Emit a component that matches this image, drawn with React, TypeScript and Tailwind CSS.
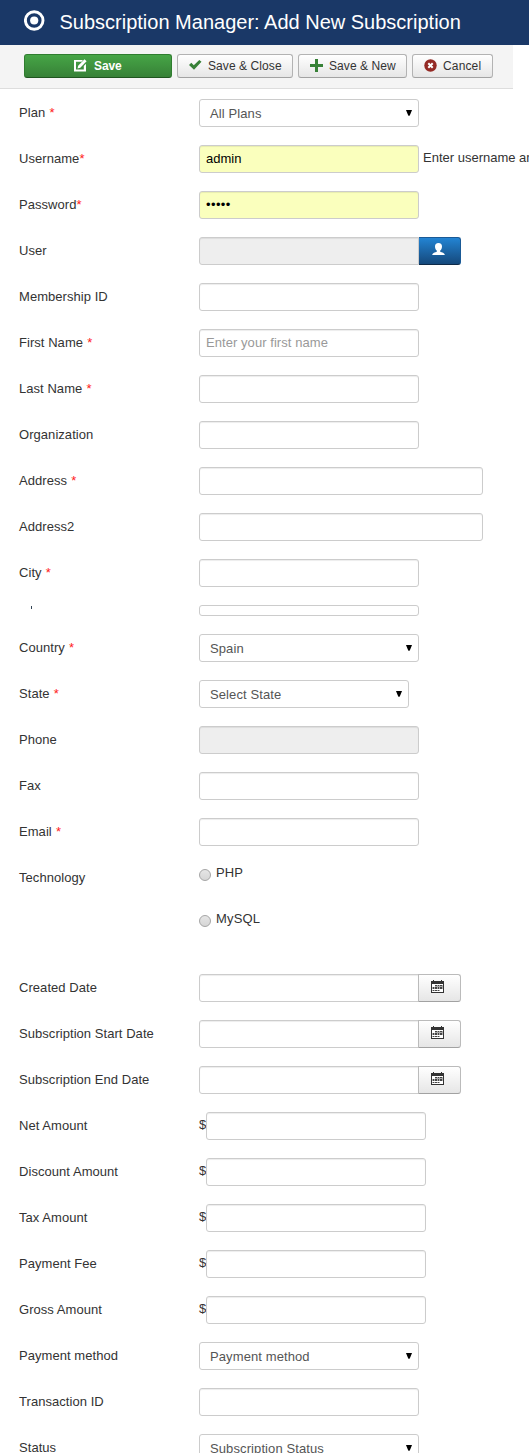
import type { ReactNode } from "react";

const fieldBase =
  "block h-7 shrink-0 rounded-[3px] border border-[#ccc] px-1.5 text-[13px] leading-[18px] outline-none shadow-[inset_0_1px_1px_rgba(0,0,0,0.075)]";

function Row({ label, required, tight, children }: { label: string; required?: boolean; tight?: boolean; children: ReactNode }) {
  return (
    <div className="mb-[18px] flex h-7 items-start">
      <label className="w-[180px] shrink-0 pt-[5px] leading-[18px] tracking-[0.05px] whitespace-nowrap">
        {label}
        {required && <span className={tight ? "text-[#ff2020]" : "ml-[0.5px] text-[#ff2020]"}>{tight ? "*" : " *"}</span>}
      </label>
      {children}
    </div>
  );
}

function TextField({ className = "w-[220px] bg-white", ...rest }: { className?: string; type?: string; placeholder?: string; defaultValue?: string; disabled?: boolean }) {
  return <input className={`${fieldBase} pb-[2px] placeholder:tracking-[0.06px] placeholder:text-[#999] ${className}`} {...rest} />;
}

function SelectBox({ value, className = "w-[220px]" }: { value: string; className?: string }) {
  return (
    <button type="button" className={`flex h-7 items-center justify-between rounded-[3px] border border-[#ccc] bg-white pr-[6px] pl-[10px] text-[13px] leading-[18px] tracking-[0.1px] text-[#555] ${className}`}>
      <span className="pt-[2px]">{value}</span>
      <svg width="6" height="6" viewBox="0 0 6 6" className="mb-px">
        <path d="M0 0h6L4.900 2.800 3.600 5.800H2.400L1.100 2.800z" fill="#000" />
      </svg>
    </button>
  );
}

function MoneyRow({ label }: { label: string }) {
  return (
    <Row label={label}>
      <span className="w-[7px] pt-[4px] leading-[18px]">$</span>
      <TextField />
    </Row>
  );
}

function CalendarIcon() {
  return (
    <svg width="13" height="13" viewBox="0 0 13 13" shapeRendering="crispEdges">
      <path d="M0 1h2V0h1v1h7V0h1v1h2v12H0z" fill="#333" />
      <path d="M1 4h11v8H1z" fill="#fff" />
      <path d="M4 5h8v2H4zM1 7h11v2H1zM1 10h8v1H1z" fill="#aaa" />
      <path d="M4 5h2v1H4zM7 5h1v1H7zM9 5h2v1H9zM2 7h1v2H2zM4 7h2v2H4zM7 7h1v2H7zM9 7h2v2H9zM2 10h1v1H2zM4 10h2v1H4zM7 10h1v1H7z" fill="#444" />
    </svg>
  );
}

function DateRow({ label }: { label: string }) {
  return (
    <Row label={label}>
      <TextField className="w-[220px] rounded-r-none bg-white" />
      <button type="button" className="-ml-px flex h-7 w-[43px] justify-center rounded-r-[3px] border border-[#bbb] border-b-[#a2a2a2] bg-linear-to-b from-white to-[#e6e6e6] pt-[5px] pr-[4px]">
        <CalendarIcon />
      </button>
    </Row>
  );
}

function RadioRow({ text }: { text: string }) {
  return (
    <div className="mb-7 flex h-[18px] items-start">
      <span className="mt-[5px] mr-[5px] h-3 w-3 rounded-full border border-[#a5a5a5] bg-linear-to-b from-[#e6e6e6] to-[#d6d6d6]" />
      <span className="leading-[18px] tracking-[0.15px]">{text}</span>
    </div>
  );
}

function ToolButton({ icon, children, className }: { icon: ReactNode; children: ReactNode; className: string }) {
  return (
    <button type="button" className={`flex h-6 shrink-0 items-center rounded-[3px] border border-[#b3b3b3] border-b-[#a2a2a2] bg-linear-to-b from-white to-[#e6e6e6] text-[12px] text-[#333] whitespace-nowrap ${className}`}>
      {icon}
      <span>{children}</span>
    </button>
  );
}

export default function App() {
  return (
    <div className="h-[1453px] w-[529px] overflow-hidden bg-white font-['Liberation_Sans',Arial,sans-serif] text-[13px] text-[#333]">
      <header className="flex h-[45px] items-center bg-[#1a3867] pl-6">
        <svg width="21" height="21" viewBox="0 0 21 21" className="mr-[15px] mb-[4px]">
          <circle cx="10.2" cy="10.5" r="8.8" fill="none" stroke="#fff" strokeWidth="2.9" />
          <circle cx="10.2" cy="10.5" r="4.1" fill="#fff" />
        </svg>
        <h1 className="mb-[2px] -ml-[0.5px] text-[20px] leading-6 whitespace-nowrap text-white">Subscription Manager: Add New Subscription</h1>
      </header>

      <div className="flex h-11 w-[513px] gap-[5px] border-b border-[#ddd] bg-[#f4f4f4] pt-[9px] pl-6">
        <button type="button" className="flex h-6 w-[148px] shrink-0 items-center rounded-[3px] border border-[#2f7d2f] border-b-[#1f551f] bg-linear-to-b from-[#46a546] to-[#378137] pl-[49px] text-[12px] font-bold text-white">
          <svg width="13" height="13" viewBox="0 0 13 13" className="mr-[7px] mb-px">
            <path d="M0 1h9L7.5 2.8H2v7.7h7.8V7L12 4.8V12.5H0z" fill="#fff" />
            <path d="M3.5 9.5l.7-2.8L10.5.3 12.6 2.3 6.3 8.7z" fill="#fff" />
          </svg>
          <span className="tracking-[-0.1px]">Save</span>
        </button>
        <ToolButton className="w-[116px] pl-[11px] tracking-[0.08px]" icon={
          <svg width="13" height="10" viewBox="0 0 13 10" className="mr-[6px] mb-[2px]"><path d="M0 5l2.300-2.200 2.500 2.500L10.300 0 12.500 1.700 5 9.700z" fill="#378137" /></svg>
        }>Save &amp; Close</ToolButton>
        <ToolButton className="w-[109px] pl-[11px] tracking-[0.08px]" icon={
          <svg width="13" height="13" viewBox="0 0 13 13" className="mr-[6px] mb-[2px]"><path d="M5 0h3v5h5v3H8v5H5V8H0V5h5z" fill="#378137" /></svg>
        }>Save &amp; New</ToolButton>
        <ToolButton className="w-[81px] pl-[11px] tracking-[0.15px]" icon={
          <svg width="13" height="13" viewBox="0 0 13 13" className="mr-[6px] mb-[2px]">
            <circle cx="6.5" cy="6.5" r="6.2" fill="#942a25" />
            <path d="M4.300 4.300l4.400 4.400M8.700 4.300L4.300 8.700" stroke="#fff" strokeWidth="2" />
          </svg>
        }>Cancel</ToolButton>
      </div>

      <form className="pt-[10px] pl-[19px]">
        <Row label="Plan" required><SelectBox value="All Plans" /></Row>
        <Row label="Username" required tight>
          <TextField className="w-[220px] bg-[#faffbd] text-black" defaultValue="admin" />
          <span className="ml-1 pt-[4px] leading-[18px] whitespace-nowrap">Enter username and password</span>
        </Row>
        <Row label="Password" required tight>
          <TextField type="password" className="w-[220px] bg-[#faffbd] tracking-[0.4px] text-black" defaultValue="admin" />
        </Row>
        <Row label="User">
          <TextField className="w-[220px] rounded-r-none bg-[#eee]" disabled />
          <button type="button" className="flex h-7 w-[42px] justify-center rounded-r-[3px] border border-l-0 border-[#1a5a96] border-b-[#0e2a48] bg-linear-to-b from-[#2384d3] to-[#15497c] pt-[5px] pr-[3px]">
            <svg width="13" height="13" viewBox="0 0 13 13"><path d="M6.500 0C8.800 0 10 1.400 10 3.400C10 5.200 9.200 6.700 8.200 7.500V8.700C10 9.200 12.500 10 12.900 12H.1C.5 10 3 9.200 4.800 8.700V7.500C3.800 6.700 3 5.200 3 3.400C3 1.400 4.200 0 6.500 0z" fill="#fff" /></svg>
          </button>
        </Row>
        <Row label="Membership ID"><TextField /></Row>
        <Row label="First Name" required><TextField placeholder="Enter your first name" /></Row>
        <Row label="Last Name" required><TextField /></Row>
        <Row label="Organization"><TextField /></Row>
        <Row label="Address" required><TextField className="w-[284px] bg-white" /></Row>
        <Row label="Address2"><TextField className="w-[284px] bg-white" /></Row>
        <Row label="City" required><TextField /></Row>

        <div className="mb-[18px] flex h-[11px]">
          <div className="w-[180px] pt-px pl-3"><div className="h-[3px] w-px bg-[#345]" /></div>
          <div className="h-[11px] w-[220px] rounded-[3px] border border-[#ccc]" />
        </div>

        <Row label="Country" required><SelectBox value="Spain" /></Row>
        <Row label="State" required><SelectBox value="Select State" className="w-[210px]" /></Row>
        <Row label="Phone"><TextField className="w-[220px] bg-[#eee]" disabled /></Row>
        <Row label="Fax"><TextField /></Row>
        <Row label="Email" required><TextField /></Row>

        <div className="flex h-[110px]">
          <label className="w-[180px] pt-[5px] leading-[18px] tracking-[0.05px]">Technology</label>
          <div>
            <RadioRow text="PHP" />
            <RadioRow text="MySQL" />
          </div>
        </div>

        <DateRow label="Created Date" />
        <DateRow label="Subscription Start Date" />
        <DateRow label="Subscription End Date" />
        <MoneyRow label="Net Amount" />
        <MoneyRow label="Discount Amount" />
        <MoneyRow label="Tax Amount" />
        <MoneyRow label="Payment Fee" />
        <MoneyRow label="Gross Amount" />
        <Row label="Payment method"><SelectBox value="Payment method" /></Row>
        <Row label="Transaction ID"><TextField /></Row>
        <Row label="Status"><SelectBox value="Subscription Status" /></Row>
      </form>
    </div>
  );
}
